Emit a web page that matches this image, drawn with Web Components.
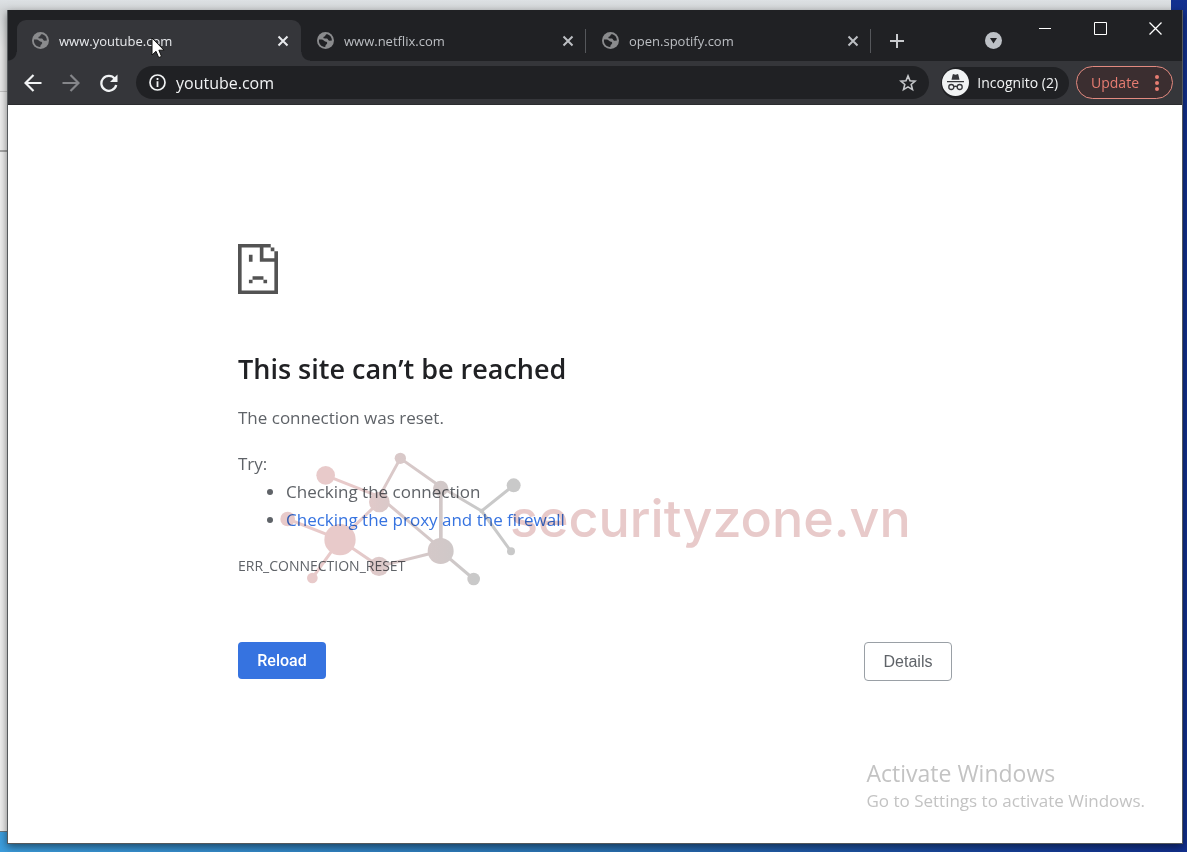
<!DOCTYPE html>
<html lang="en">
<head>
<meta charset="utf-8">
<meta name="viewport" content="width=device-width, initial-scale=1">
<title>youtube.com</title>
<style>
  body{margin:0;font-family:"Open Sans","Noto Sans",sans-serif}
</style>
</head>
<body>
<desktop-view>
  <browser-window>
    <tab-strip slot="tabs">
      <browser-tab active>www.youtube.com</browser-tab>
      <browser-tab>www.netflix.com</browser-tab>
      <browser-tab>open.spotify.com</browser-tab>
    </tab-strip>
    <tool-bar slot="toolbar" url="youtube.com"></tool-bar>
    <error-page>
      <span slot="title">This site can’t be reached</span>
      <span slot="summary">The connection was reset.</span>
      <span slot="code">ERR_CONNECTION_RESET</span>
    </error-page>
  </browser-window>
  <site-watermark slot="overlay">securityzone.vn</site-watermark>
  <activation-notice slot="overlay"></activation-notice>
  <mouse-pointer slot="overlay"></mouse-pointer>
</desktop-view>

<script>
  const define = (name, html, setup) => customElements.define(name, class extends HTMLElement {
    connectedCallback() {
      if (this.shadowRoot) return;
      const s = this.attachShadow({ mode: 'open' });
      s.innerHTML = '<style>*{box-sizing:border-box;margin:0;padding:0}button{border:0;background:none;font:inherit;color:inherit}svg{display:block}</style>' + html;
      if (setup) setup(this, s);
    }
  });

  define('desktop-view', `
    <style>
      :host{display:flex;box-sizing:border-box;min-height:100vh;padding:10px 4px 8px 7px;position:relative;overflow:hidden;background:linear-gradient(90deg,#3c9ddd,#2a73b4 50%,#17419a 85%,#12308f)}
      .back{position:absolute;inset:0 16px 20px 0;background:#efefef;border-bottom:1px solid #6c7880}
      .back div{height:92px;background:linear-gradient(#dde1e4,#d3d6d8 10px,#e8e8e8 50px);border-bottom:1px solid #c4c4c4}
      .back div+div{height:60px;background:#eee;border-bottom:2px solid #a6a6a6}
      ::slotted(browser-window){flex:1;position:relative}
    </style>
    <div class="back"><div></div><div></div></div>
    <slot></slot>
    <slot name="overlay"></slot>`);

  define('browser-window', `
    <style>
      :host{display:flex;flex-direction:column;box-sizing:border-box;min-width:0;background:#fff;border:1px solid #55595c;border-width:0 1px 1px;box-shadow:0 3px 8px rgba(0,0,0,.5)}
      main{flex:1;display:flex;flex-direction:column}
    </style>
    <slot name="tabs"></slot>
    <slot name="toolbar"></slot>
    <main><slot></slot></main>`);

  define('tab-strip', `
    <style>
      :host{display:flex;height:51px;padding-left:9px;background:#202124;color:#c9cbce}
      .tabs{display:flex;gap:1px;align-items:flex-end;flex:0 1 854px;min-width:0}
      .new,.search{align-self:flex-end;height:41px;width:38px;display:grid;place-items:center}
      .new{margin-left:7px}
      .spacer{flex:1}
      .search{margin-right:6px}
      .caption{display:flex;height:36px;margin-right:-1px}
      .caption button{width:55px;display:grid;place-items:center;color:#fff}
    </style>
    <div class="tabs" role="tablist"><slot></slot></div>
    <button class="new" aria-label="New tab"><svg width="14" height="14" viewBox="0 0 14 14" stroke="currentColor" stroke-width="2"><path d="M7 0V14M0 7H14"/></svg></button>
    <div class="spacer"></div>
    <button class="search" aria-label="Search tabs"><svg width="17" height="17" viewBox="0 0 17 17"><circle cx="8.500" cy="8.500" r="8.500" fill="#bdc1c6"/><path d="M5 6H12L8.500 11.500Z" fill="#202124"/></svg></button>
    <div class="caption">
      <button aria-label="Minimize"><svg width="13" height="13" fill="none" stroke="currentColor"><path d="M0 6.500H12"/></svg></button>
      <button aria-label="Maximize"><svg width="13" height="13" fill="none" stroke="currentColor"><path d="M.5 .5H12.500V12.500H.5Z"/></svg></button>
      <button aria-label="Close"><svg width="13" height="13" fill="none" stroke="currentColor" stroke-width="1.300"><path d="M.5 .5L12.500 12.500M12.500 .5L.5 12.500"/></svg></button>
    </div>`);

  define('browser-tab', `
    <style>
      :host{display:flex;align-items:center;flex:1 1 0;min-width:0;height:41px;box-sizing:border-box;padding:0 12px 0 15px;position:relative;font-size:13px;color:#bcbfc3}
      :host([active]){background:#35363a;color:#e8eaed;border-radius:9px 9px 0 0}
      :host([active])::before,:host([active])::after{content:"";position:absolute;bottom:0;width:9px;height:9px}
      :host([active])::before{right:100%;background:radial-gradient(circle at 0 0,#202124 8px,#35363a 9px)}
      :host([active])::after{left:100%;background:radial-gradient(circle at 100% 0,#202124 8px,#35363a 9px)}
      :host(:not([active]))::after{content:"";position:absolute;right:0;top:9px;height:24px;width:1px;background:#55575b}
      .title{flex:1;min-width:0;display:flex;align-items:center;gap:10px;text-align:left;white-space:nowrap;overflow:hidden}
      .close{width:12px;height:12px}
    </style>
    <button class="title" role="tab">
      <svg width="17" height="17" viewBox="0 0 17 17"><circle cx="8.500" cy="8.500" r="8.500" fill="#8a8b8d"/><path d="M2 7.500C4.300 7.200 6.400 7.500 7 8.800C7.600 10 10.300 9.300 10.200 11C10.100 12.500 8.600 12.200 8.300 14.900C4.800 15.200 1.300 11.900 2 7.500ZM10.500 2.200C9.300 2 8.300 2.600 8.300 3.700C8.300 4.700 6.500 4.200 6.400 5.400C6.300 6.700 8.700 6.300 10 6.600C11.200 6.900 10.900 8.600 12.300 8.700L14.900 8.600C15 5.500 13.200 3 10.500 2.200Z" fill="var(--cut)"/></svg>
      <slot></slot>
    </button>
    <button class="close" aria-label="Close tab"><svg width="12" height="12" viewBox="0 0 12 12" stroke="currentColor" stroke-width="2"><path d="M1.500 1.500L10.500 10.500M10.500 1.500L1.500 10.500"/></svg></button>`,
    el => el.style.setProperty('--cut', el.hasAttribute('active') ? '#35363a' : '#202124'));

  define('tool-bar', `
    <style>
      :host{display:flex;align-items:center;height:44px;box-sizing:border-box;padding:0 9px 0 6px;background:#35363a;border-bottom:1px solid #2b2c2f;color:#f1f3f4}
      .nav{width:38px;height:34px;display:grid;place-items:center}
      .nav:disabled{color:#85868a}
      .box{flex:1;min-width:0;display:flex;align-items:center;gap:10px;height:33px;margin:0 12px 0 8px;padding:0 12px 0 13px;border-radius:17px;background:#202124}
      input{flex:1;min-width:0;border:0;outline:0;background:none;color:inherit;font:16px "Open Sans","Noto Sans",sans-serif}
      .pill{display:flex;align-items:center;height:32px;border-radius:16px;font-size:14px;white-space:nowrap}
      .mode{gap:8px;padding:0 11px 0 1px;margin-right:7px;background:#202124}
      .update{gap:16px;height:33px;border:1px solid #e38a80;border-radius:17px;padding:0 13px 0 14px;background:#3b2e30;color:#e77d72}
    </style>
    <button class="nav" aria-label="Back"><svg width="18" height="18" viewBox="0 0 18 18" fill="none" stroke="currentColor" stroke-width="2.200"><path d="M17.500 9H2M9.500 1L1.500 9L9.500 17"/></svg></button>
    <button class="nav" aria-label="Forward" disabled><svg width="18" height="18" viewBox="0 0 18 18" fill="none" stroke="currentColor" stroke-width="2.200"><path d="M.5 9H16M8.500 1L16.500 9L8.500 17"/></svg></button>
    <button class="nav" aria-label="Reload page"><svg width="18" height="18" viewBox="0 0 18 18"><path d="M14.800 4.700A7.500 7.500 0 1 0 16.200 11" fill="none" stroke="currentColor" stroke-width="2.300"/><path d="M17.500 .5V8H10Z" fill="currentColor"/></svg></button>
    <div class="box">
      <svg width="17" height="17" viewBox="0 0 17 17"><circle cx="8.500" cy="8.500" r="7.500" fill="none" stroke="currentColor" stroke-width="1.700"/><path d="M7.600 4H9.400V5.900H7.600ZM7.600 7.300H9.400V13H7.600Z" fill="currentColor"/></svg>
      <input type="text" aria-label="Address" spellcheck="false">
      <button aria-label="Bookmark"><svg width="18" height="18" viewBox="0 0 18 18" fill="none" stroke="#c6c8cb" stroke-width="1.600"><path d="M9 1.900L11 6.700L16.200 7.100L12.200 10.500L13.500 15.600L9 12.900L4.500 15.600L5.800 10.500L1.800 7.100L7 6.700Z"/></svg></button>
    </div>
    <button class="pill mode">
      <svg width="27" height="27" viewBox="0 0 27 27"><circle cx="13.500" cy="13.500" r="13.500" fill="#f1f3f4"/><path d="M9.500 10.800L10.700 5.600Q11 4.900 11.800 5.200L13.500 5.800L15.200 5.200Q16 4.900 16.300 5.600L17.500 10.800ZM5 12H22V13.300H5Z" fill="#35363a"/><g fill="none" stroke="#35363a" stroke-width="1.300"><circle cx="9.300" cy="18" r="2.500"/><circle cx="17.700" cy="18" r="2.500"/><path d="M11.800 17.700Q13.500 16.800 15.200 17.700"/></g></svg>
      Incognito (2)
    </button>
    <button class="pill update">Update
      <svg width="4" height="16" viewBox="0 0 4 16" fill="currentColor"><circle cx="2" cy="2" r="2"/><circle cx="2" cy="8" r="2"/><circle cx="2" cy="14" r="2"/></svg>
    </button>`,
    (el, s) => { s.querySelector('input').setAttribute('value', el.getAttribute('url')); });

  define('error-page', `
    <style>
      :host{display:block;width:100%;max-width:714px;box-sizing:border-box;margin:0 auto;padding-top:139px;color:#5f6368;font-size:17px;line-height:28px}
      h1{margin:56px 0 16px;font-size:27px;line-height:38px;font-weight:600;color:#202124}
      .try{margin-top:18px}
      ul{padding-left:48px}
      a{color:#3673e0;text-decoration:none}
      .code{margin-top:18px;font-size:14px}
      .actions{display:flex;justify-content:space-between;align-items:flex-start;margin-top:62px}
      .actions button{width:88px;height:37px;border-radius:4px;font:500 16px Roboto,sans-serif}
      .reload{background:#3673e0;color:#fff}
      .actions .details{height:39px;border:1px solid #9aa0a6;font:16px "Liberation Sans",sans-serif;color:#5f6368}
    </style>
    <svg width="40" height="50" viewBox="0 0 11 14" preserveAspectRatio="none" fill="#535353"><path fill-rule="evenodd" d="M0 0H9V1H10V2H11V14H0ZM1 1V13H10V5H6V1ZM7 1V4H10V2H9V1Z"/><path d="M3 3H4V5H3ZM4 9H7V10H8V11H7V10H4V11H3V10H4Z"/></svg>
    <h1><slot name="title"></slot></h1>
    <p><slot name="summary"></slot></p>
    <p class="try">Try:</p>
    <ul>
      <li>Checking the connection</li>
      <li><a href="#buttons">Checking the proxy and the firewall</a></li>
    </ul>
    <p class="code"><slot name="code"></slot></p>
    <div class="actions" id="buttons">
      <button class="reload">Reload</button>
      <button class="details">Details</button>
    </div>`);

  define('site-watermark', `
    <style>
      :host{display:flex;align-items:center;position:absolute;left:280px;top:450px;pointer-events:none;mix-blend-mode:multiply;color:#e8caca;font:500 52px/60px Inter,sans-serif}
      svg{flex:none;margin-right:-13px}
    </style>
    <svg width="243" height="137" viewBox="180 30 729 411">
      <defs><linearGradient id="g" gradientUnits="userSpaceOnUse" x1="180" y1="0" x2="909" y2="0"><stop offset=".3" stop-color="#e8caca"/><stop offset=".42" stop-color="#dcc9c9"/><stop offset=".68" stop-color="#d1c8c8"/><stop offset=".8" stop-color="#c9c9c9"/></linearGradient></defs>
      <path d="M317 106L478 170L541 55L662 140L785 213L881 136M785 213L873 334M203 237L345 293M478 186L360 299L277 414M360 299L477 379L662 333L761 417M478 170L662 325" fill="none" stroke="url(#g)" stroke-width="9"/>
      <path fill="url(#g)" d="M657 145H668V333H657Z"/>
      <g fill="url(#g)"><circle cx="317" cy="106" r="28"/><circle cx="541" cy="55" r="17"/><circle cx="478" cy="186" r="31"/><circle cx="662" cy="145" r="23"/><circle cx="881" cy="136" r="21"/><circle cx="785" cy="213" r="7"/><circle cx="203" cy="237" r="22"/><circle cx="360" cy="299" r="47"/><circle cx="477" cy="379" r="29"/><circle cx="662" cy="333" r="39"/><circle cx="277" cy="414" r="16"/><circle cx="761" cy="417" r="19"/><circle cx="873" cy="334" r="12"/></g>
    </svg>
    <span><slot></slot></span>`);

  define('activation-notice', `
    <style>
      :host{display:block;position:absolute;right:42px;bottom:39px;color:#c3c3c3;pointer-events:none;font-size:17px;line-height:24px}
      .head{font-size:23px;line-height:32px}
    </style>
    <p class="head">Activate Windows</p>
    <p>Go to Settings to activate Windows.</p>`);

  define('mouse-pointer', `
    <style>:host{display:block;position:absolute;left:151px;top:37px;pointer-events:none}</style>
    <svg width="14" height="22" viewBox="0 0 14 22"><path d="M1 1V18L5 14.300L7.700 20.600L10.500 19.400L7.900 13.200H13Z" fill="#fff" stroke="#111" stroke-width="1"/></svg>`);
</script>
</body>
</html>
